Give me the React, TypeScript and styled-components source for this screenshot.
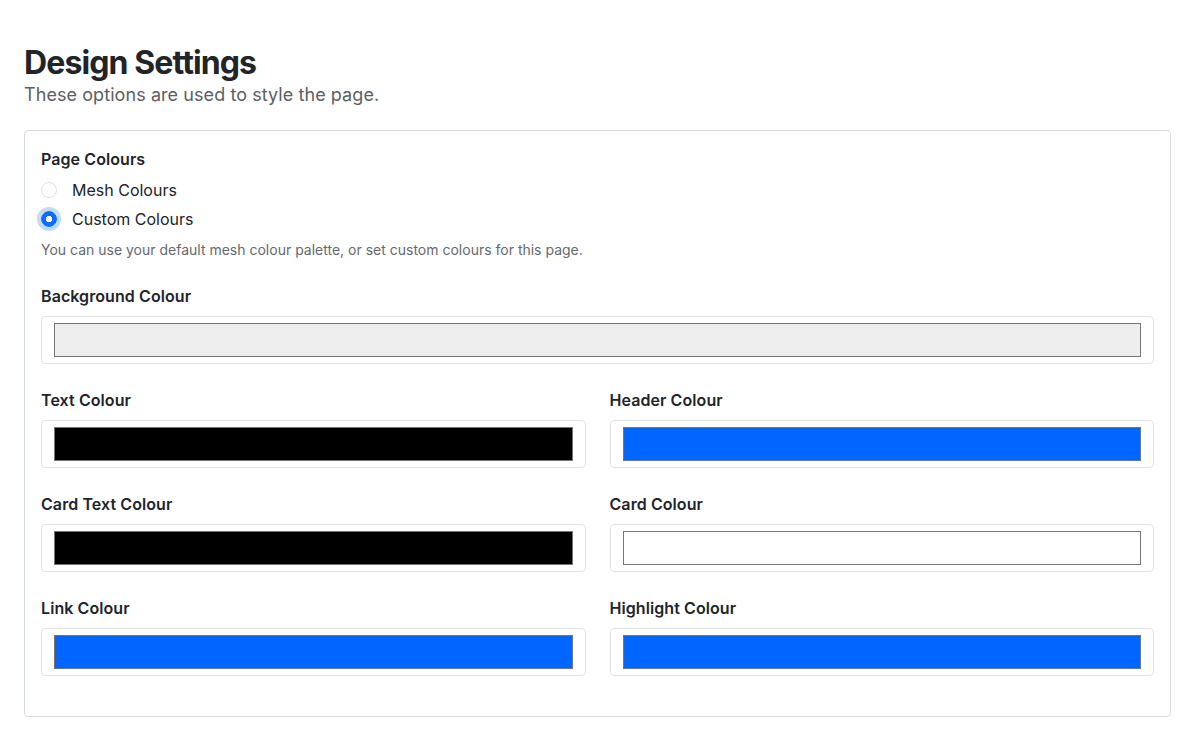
import React from 'react'
import styled, { createGlobalStyle } from 'styled-components'

const GlobalStyle = createGlobalStyle`
  body {
    margin: 0;
    background: #fff;
    font-family: Inter, "Noto Sans", sans-serif;
    color: #212529;
  }
`

const Page = styled.main`
  padding: 44px 10px 20px 24px;
`

const Title = styled.h1`
  margin: 0;
  font-size: 32px;
  line-height: 1.2;
  font-weight: 700;
  letter-spacing: -0.028em;
  color: #212529;
`

const Subtitle = styled.p`
  margin: 0 0 22px;
  font-size: 18px;
  line-height: 1.4;
  letter-spacing: 0.004em;
  color: #5c6064;
`

const Card = styled.section`
  border: 1px solid #d9dcdf;
  border-radius: 4px;
  padding: 16px;
`

const Group = styled.div`
  margin-bottom: 24px;
`

const Label = styled.div`
  font-size: 16px;
  line-height: 24px;
  font-weight: 600;
  letter-spacing: 0.005em;
  color: #212529;
`

const RadioList = styled.div`
  display: flex;
  flex-direction: column;
  gap: 5px;
  margin-top: 7px;
`

const RadioRow = styled.label`
  display: flex;
  align-items: center;
  gap: 15px;
  font-size: 16px;
  line-height: 24px;
  color: #212529;
`

const RadioDot = styled.span<{ $checked?: boolean }>`
  box-sizing: border-box;
  width: 16px;
  height: 16px;
  border-radius: 50%;
  flex: none;
  border: 1px solid ${p => (p.$checked ? '#0d6efd' : '#dee2e6')};
  background: ${p =>
    p.$checked ? 'radial-gradient(circle, #fff 0 3px, #0d6efd 3.5px)' : '#fff'};
  box-shadow: ${p => (p.$checked ? '0 0 0 4px rgba(13, 110, 253, 0.25)' : 'none')};
`

const Help = styled.div`
  margin-top: 8px;
  font-size: 14px;
  line-height: 21px;
  color: #666a6e;
`

const Grid = styled.div`
  display: grid;
  grid-template-columns: 1fr 1fr;
  column-gap: 24px;
`

const Field = styled.div`
  margin-bottom: 24px;
`

const SwatchBox = styled.div`
  box-sizing: border-box;
  margin-top: 8px;
  height: 48px;
  padding: 6px 12px;
  border: 1px solid #dee2e6;
  border-radius: 4px;
  background: #fff;
`

const Swatch = styled.div<{ $color: string }>`
  box-sizing: border-box;
  height: 100%;
  border: 1px solid #767676;
  background: ${p => p.$color};
`

const ColourField = ({ label, color }: { label: string; color: string }) => (
  <Field>
    <Label>{label}</Label>
    <SwatchBox>
      <Swatch $color={color} />
    </SwatchBox>
  </Field>
)

const fields = [
  { label: 'Text Colour', color: '#000000' },
  { label: 'Header Colour', color: '#0066ff' },
  { label: 'Card Text Colour', color: '#000000' },
  { label: 'Card Colour', color: '#ffffff' },
  { label: 'Link Colour', color: '#0066ff' },
  { label: 'Highlight Colour', color: '#0066ff' },
]

const App = () => (
  <>
    <GlobalStyle />
    <Page>
      <Title>Design Settings</Title>
      <Subtitle>These options are used to style the page.</Subtitle>
      <Card>
        <Group>
          <Label>Page Colours</Label>
          <RadioList>
            <RadioRow>
              <RadioDot />
              Mesh Colours
            </RadioRow>
            <RadioRow>
              <RadioDot $checked />
              Custom Colours
            </RadioRow>
          </RadioList>
          <Help>You can use your default mesh colour palette, or set custom colours for this page.</Help>
        </Group>
        <ColourField label="Background Colour" color="#eeeeee" />
        <Grid>
          {fields.map(f => (
            <ColourField key={f.label} label={f.label} color={f.color} />
          ))}
        </Grid>
      </Card>
    </Page>
  </>
)

export default App
